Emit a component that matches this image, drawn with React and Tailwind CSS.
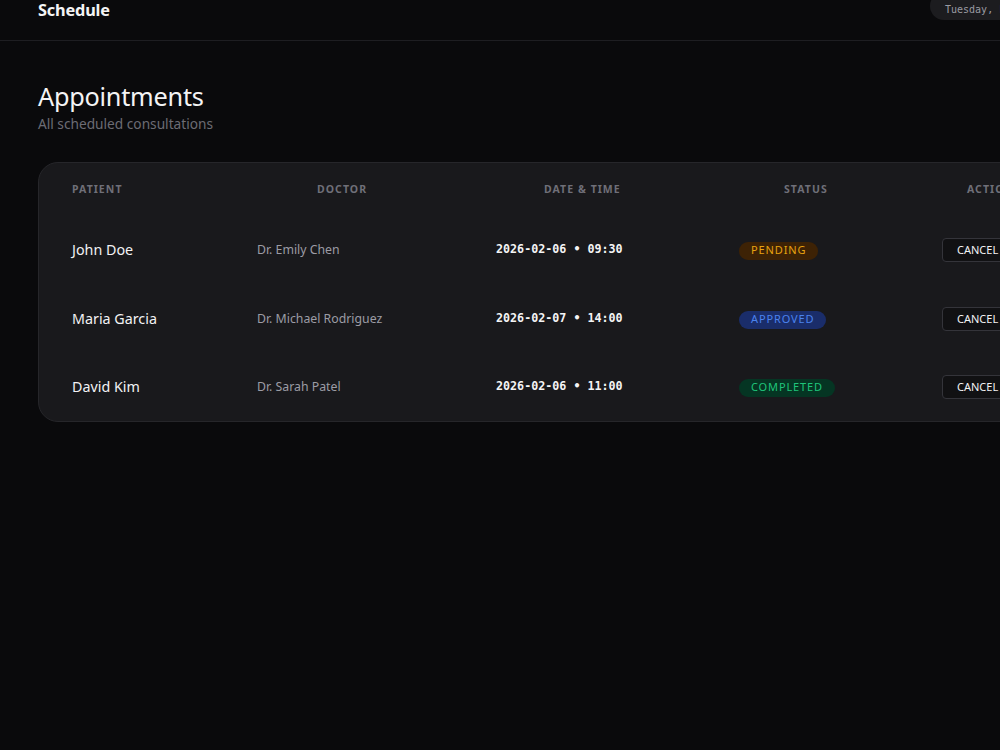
import React from "react";

const rows = [
  { patient: "John Doe", doctor: "Dr. Emily Chen", date: "2026-02-06 • 09:30", status: "PENDING" },
  { patient: "Maria Garcia", doctor: "Dr. Michael Rodriguez", date: "2026-02-07 • 14:00", status: "APPROVED" },
  { patient: "David Kim", doctor: "Dr. Sarah Patel", date: "2026-02-06 • 11:00", status: "COMPLETED" },
];

function Badge({ status }) {
  if (status === "PENDING")
    return (
      <span className="inline-flex items-center h-[18px] px-[12px] rounded-full bg-[#3d2205] text-[#e8a310] text-[11px] tracking-[0.08em]">
        PENDING
      </span>
    );
  if (status === "APPROVED")
    return (
      <span className="inline-flex items-center h-[18px] px-[12px] rounded-full bg-[#1a2d6a] text-[#4b83ee] text-[11px] tracking-[0.08em]">
        APPROVED
      </span>
    );
  return (
    <span className="inline-flex items-center h-[18px] px-[12px] rounded-full bg-[#053523] text-[#1fc47a] text-[11px] tracking-[0.08em]">
      COMPLETED
    </span>
  );
}

export default function App() {
  const sans = { fontFamily: '"Noto Sans", "Open Sans", sans-serif' };
  return (
    <div className="w-[1000px] h-[750px] overflow-hidden bg-[#0a0a0c] text-white" style={sans}>
      <div className="w-[1100px]">
        <header className="h-[41px] border-b border-[#1e1e22] flex items-start justify-between pl-[38px]">
          <div className="text-[16.3px] font-bold leading-[21px] tracking-[-0.01em] text-[#f4f4f5]">Schedule</div>
          <div
            className="mt-[-8px] h-[28px] pl-[15px] pb-[4px] flex items-end rounded-l-full bg-[#1c1c1f] text-[#9a9aa2] text-[10px] leading-[12px] w-[170px] whitespace-nowrap"
            style={{ fontFamily: '"DejaVu Sans Mono", monospace' }}
          >
            Tuesday, February 3
          </div>
        </header>

        <main className="pl-[38px]">
          <div className="pt-[39px]">
            <h1 className="text-[25.3px] leading-[32px] text-[#f4f4f5] tracking-[-0.01em]">Appointments</h1>
            <p className="text-[13.7px] leading-[18px] text-[#6c6c74] mt-[3px]">All scheduled consultations</p>
          </div>

          <div className="mt-[29px] w-[1040px] rounded-[20px] border border-[#26262a] bg-[#19191c] pl-[33px]">
            <div className="grid grid-cols-[185px_239px_243px_203px_1fr] h-[53px] items-center text-[10.5px] font-bold tracking-[0.1em] text-[#6f6f78]">
              <div>PATIENT</div>
              <div className="pl-[60px]">DOCTOR</div>
              <div className="pl-[48px]">DATE &amp; TIME</div>
              <div className="pl-[45px]">STATUS</div>
              <div className="pl-[25px]">ACTIONS</div>
            </div>
            {rows.map((r, i) => (
              <div
                key={i}
                className={`grid grid-cols-[185px_239px_243px_203px_1fr] items-center ${i === 2 ? "h-[67px]" : "h-[69px]"}`}
              >
                <div className="text-[14.3px] text-[#f2f2f4] pb-[1px]">{r.patient}</div>
                <div className="text-[12.3px] text-[#9c9ca5]">{r.doctor}</div>
                <div
                  className="text-[11.7px] font-bold text-[#f4f4f5] pb-[1px]"
                  style={{ fontFamily: '"DejaVu Sans Mono", monospace' }}
                >
                  {r.date}
                </div>
                <div className="flex items-center">
                  <Badge status={r.status} />
                </div>
                <div className="flex items-center pb-[1px]">
                  <button className="h-[24px] px-[14px] rounded-[4px] border border-[#34343a] bg-[#111113] text-[11px] leading-[22px] text-[#f2f2f4]">
                    CANCEL
                  </button>
                </div>
              </div>
            ))}
          </div>
        </main>
      </div>
    </div>
  );
}
